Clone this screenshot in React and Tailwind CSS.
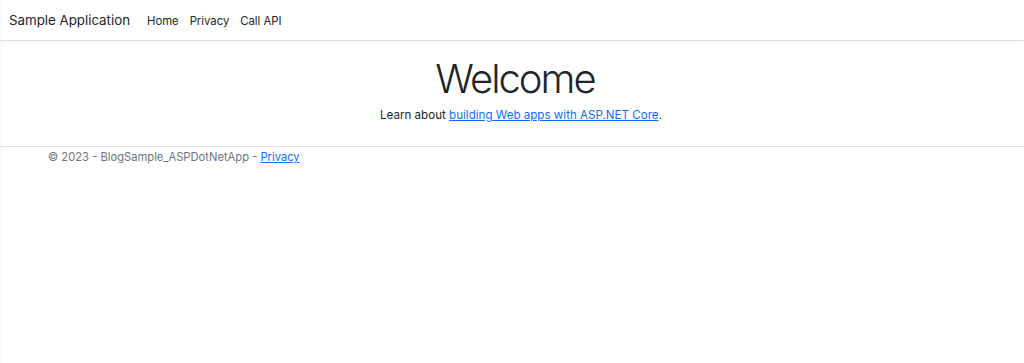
export default function App() {
  return (
    <div className="min-h-[363px] bg-white font-['Inter','Liberation_Sans',sans-serif] text-[#212529] shadow-[inset_5px_0_5px_-5px_rgba(0,0,0,0.06)]">
      {/* Navbar */}
      <header className="h-[41px] border-b border-[#dee2e6] shadow-[0_1px_3px_rgba(0,0,0,0.04)]">
        <nav className="flex h-full items-center px-[9px] pt-[2px]">
          <a href="#" className="mr-[17px] text-[13.3px] text-[#212529]">
            Sample Application
          </a>
          <ul className="flex items-center gap-[11px] text-[11.3px] text-[#212529]">
            <li>
              <a href="#">Home</a>
            </li>
            <li>
              <a href="#">Privacy</a>
            </li>
            <li>
              <a href="#">Call API</a>
            </li>
          </ul>
        </nav>
      </header>

      {/* Main */}
      <main className="pl-[6px] pt-[14px] pb-[22px] text-center">
        <h1 className="text-[40px] font-light leading-[1.2] tracking-[-2px]">Welcome</h1>
        <p className="mt-[4px] pl-[12px] text-[11.6px]">
          Learn about{" "}
          <a href="#" className="text-[#0d6efd] underline">
            building Web apps with ASP.NET Core
          </a>
          .
        </p>
      </main>

      {/* Footer */}
      <footer className="border-t border-[#dee2e6] px-[48px] pt-[2px] text-[11.2px] text-[#6c757d]">
        © 2023 - BlogSample_ASPDotNetApp -{" "}
        <a href="#" className="text-[#0d6efd] underline">
          Privacy
        </a>
      </footer>
    </div>
  );
}
